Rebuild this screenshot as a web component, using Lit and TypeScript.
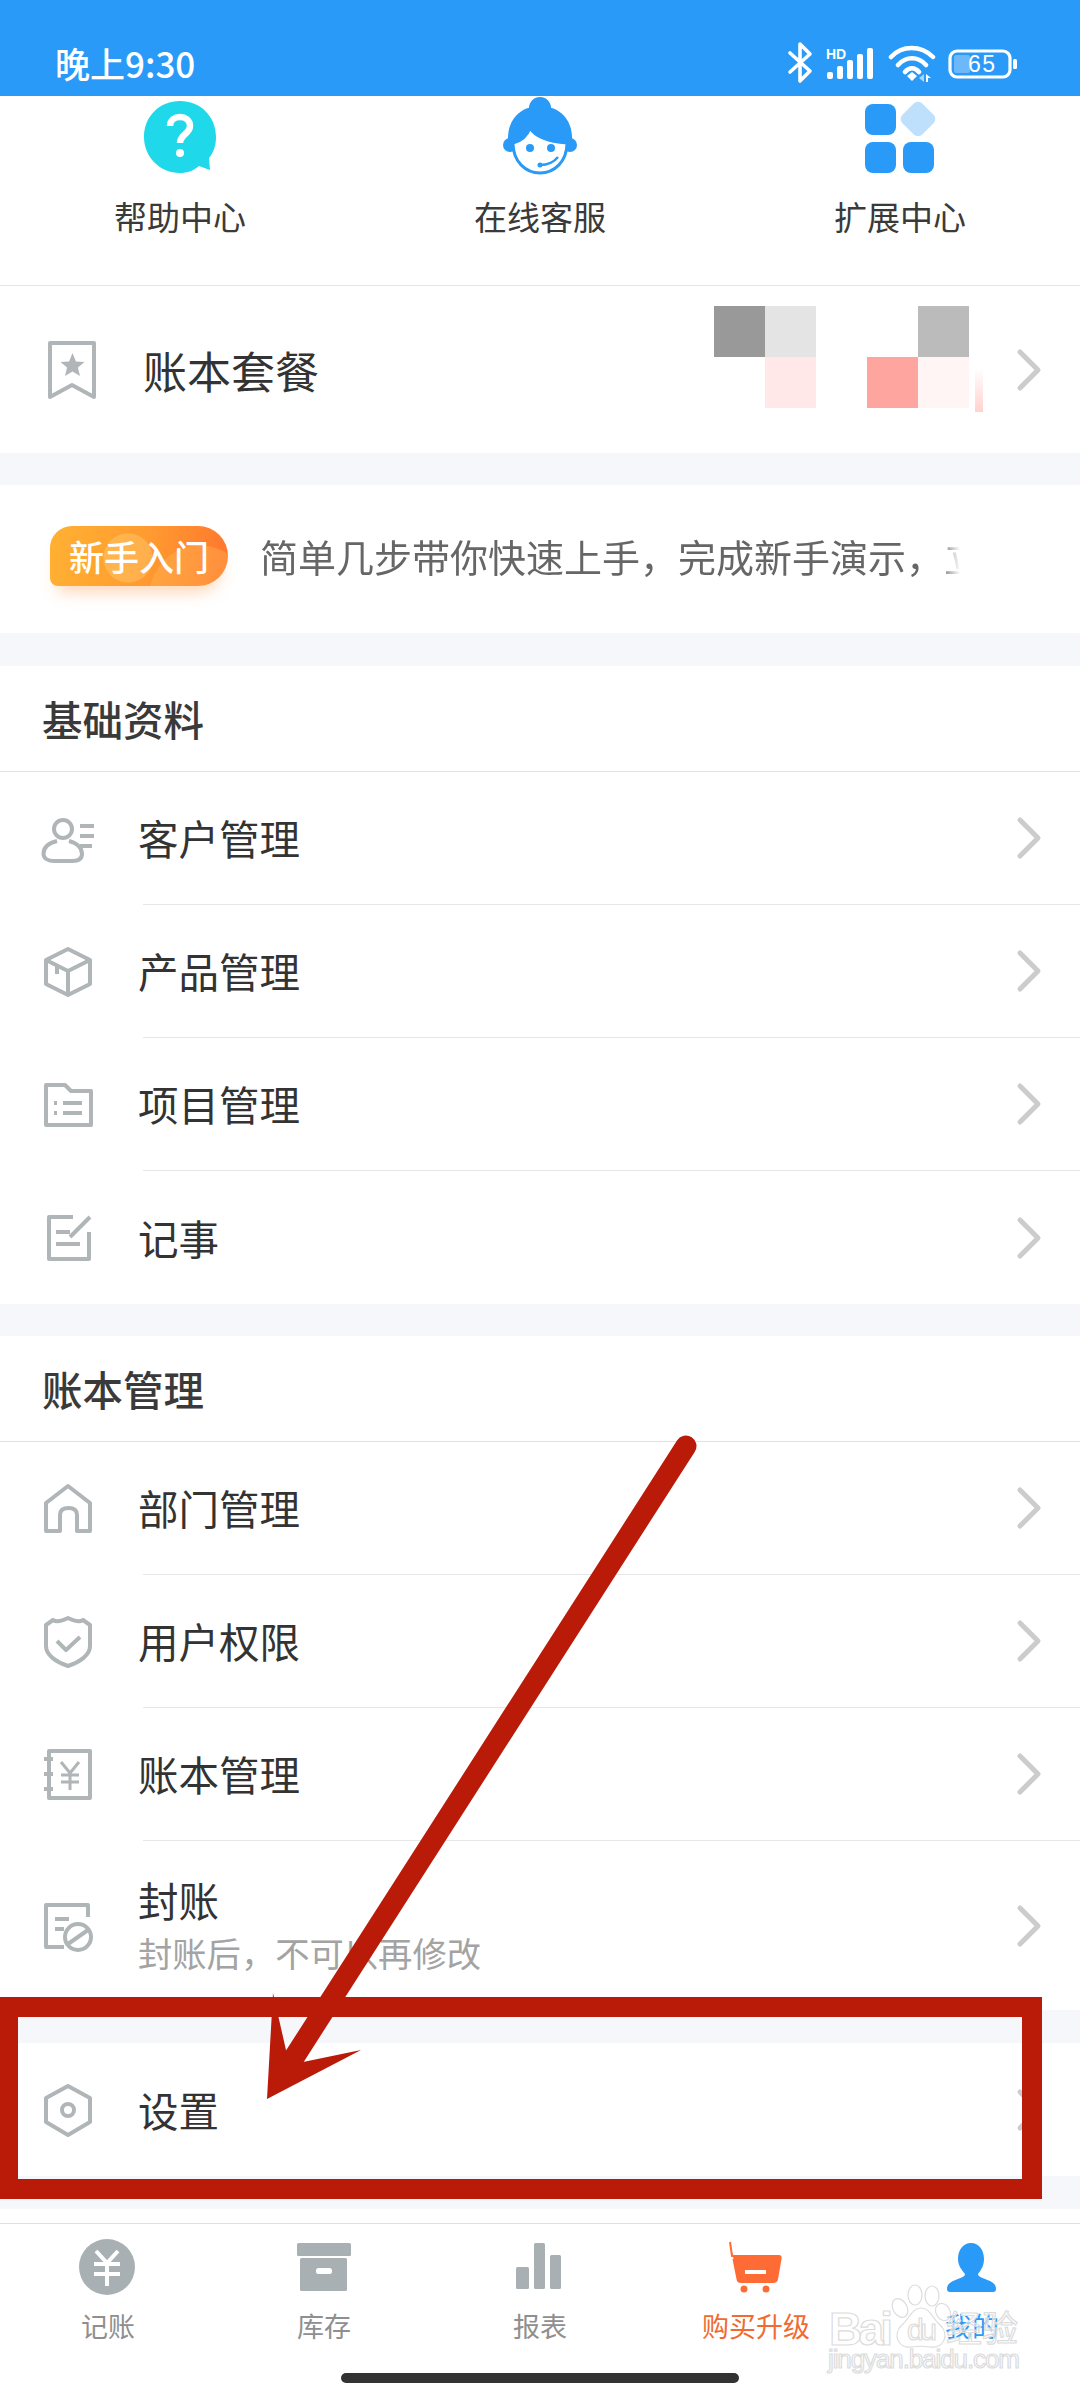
import { LitElement, html, css, svg } from "lit";
import { customElement } from "lit/decorators.js";

// Outline icons for the list rows, all on a 64 x 64 grid.
const rowIcons: Record<string, unknown> = {
  bookmark: svg`<path d="M14 5 H58 V59 L36 47 L14 59 Z"/><path class="solid" d="M36.500 15 l3.400 8.400 8.600 .6 -6.600 5.500 2.100 8.500 -7.500 -4.600 -7.500 4.600 2.100 -8.500 -6.600 -5.500 8.600 -.6 Z"/>`,
  customer: svg`<circle cx="27" cy="22" r="9"/><path d="M21 34 C12 36 7.500 41 7.500 47 C7.500 52 13 54 18 54 H36 C42 54 46 52 46 47 C46 41 41 36 33 34"/><path d="M44 19 H58 M44 29 H58 M44 39 H56"/>`,
  box: svg`<path d="M32 9 L54 20 V44 L32 55 L10 44 V20 Z"/><path d="M10 20 L32 31 L54 20 M32 31 V55 M21 26 V34"/>`,
  folder: svg`<path d="M10 12 H29 L35 18 H55 V52 H10 Z"/><path d="M27 30 H46 M27 40 H46 M18 30 H21 M18 40 H21"/>`,
  note: svg`<path d="M37 11 H13 V53 H53 V26"/><path d="M20 26 H34 M20 38 H44 M34 31 L54 11"/>`,
  home: svg`<path d="M32 9 L54 26 V54 H41 V38 Q41 31 32.500 31 Q24 31 24 38 V54 H10 V26 Z"/>`,
  shield: svg`<path d="M32 8 C38 11 44 12 47 10 L54 15 V36 C54 45 44 52 32 56 C20 52 10 45 10 36 V15 L17 10 C20 12 26 11 32 8 Z"/><path d="M21 31 L30 40 L44 27"/>`,
  ledger: svg`<path d="M13 8 H54 V55 H13 Z"/><path d="M8 16 H17 M8 31 H17 M8 46 H17"/><path class="thin" d="M25 19 L34 30 L43 19 M34 30 V47 M25 32 H43 M25 39 H43"/>`,
  seal: svg`<path d="M52 23 V11 H10 V53 H28"/><path d="M19 25 H33 M19 35 H28"/><circle cx="42" cy="43" r="13"/><path d="M32 50 L52 36"/>`,
  gear: svg`<path d="M32 8 L54 20 V44 L32 57 L10 44 V20 Z"/><circle cx="32" cy="32" r="6"/>`,
};

const chevron = html`<svg class="chev" viewBox="0 0 30 44"><path d="M6 4 L24 22 L6 40"/></svg>`;

interface Row { icon: string; label: string; note?: string }

const basics: Row[] = [
  { icon: "customer", label: "客户管理" },
  { icon: "box", label: "产品管理" },
  { icon: "folder", label: "项目管理" },
  { icon: "note", label: "记事" },
];

const books: Row[] = [
  { icon: "home", label: "部门管理" },
  { icon: "shield", label: "用户权限" },
  { icon: "ledger", label: "账本管理" },
  { icon: "seal", label: "封账", note: "封账后，不可以再修改" },
];

// Blurred plan name: one colour per mosaic tile, empty where the tile is blank.
const mosaic = ["#999999", "#e4e4e4", "", "", "#bbbbbb", "", "#ffe8e7", "", "#ffa5a0", "#fff5f4"];

const tabs = [
  {
    label: "记账", cls: "",
    icon: svg`<circle cx="31" cy="32" r="28" fill="#a9b0b3"/><path d="M20 16 L31 28 L42 16 M18 29 H44 M18 39 H44 M31 28 V51" fill="none" stroke="#fff" stroke-width="4"/>`,
  },
  {
    label: "库存", cls: "",
    icon: svg`<rect x="5" y="8" width="54" height="13" rx="1.500" fill="#a9b0b3"/><rect x="8" y="23" width="47" height="33" rx="1.500" fill="#a9b0b3"/><rect x="24" y="33" width="16" height="6" rx="2.500" fill="#fff"/>`,
  },
  {
    label: "报表", cls: "",
    icon: svg`<rect x="8" y="32" width="13" height="22" rx="1.500" fill="#a9b0b3"/><rect x="26" y="8" width="11" height="46" rx="1.500" fill="#a9b0b3"/><rect x="42" y="20" width="11" height="34" rx="1.500" fill="#a9b0b3"/>`,
  },
  {
    label: "购买升级", cls: "buy",
    icon: svg`<path d="M6 7 L8 21 H55 Q57 21 56.500 24 L53 44 Q52.500 47 49 47 H17 Q14 47 13.500 44 L9.500 24" fill="#ff6b35" stroke="#ff6b35" stroke-width="2" stroke-linejoin="round"/><rect x="21" y="35" width="21" height="4" fill="#fff"/><circle cx="20" cy="54" r="3.500" fill="#ff6b35"/><circle cx="42" cy="54" r="3.500" fill="#ff6b35"/>`,
  },
  {
    label: "我的", cls: "me",
    icon: svg`<path d="M31 8 C39 8 44 15 44 24 C44 31 41 35 38 39 C38 42 43 43 50 46 C54 48 56 50 56 54 Q56 57 53 57 H10 Q7 57 7 54 C7 50 9 48 13 46 C20 43 25 42 25 39 C22 35 18 31 18 24 C18 15 23 8 31 8 Z" fill="#2a9af8"/>`,
  },
];

@customElement("app-root")
export class AppRoot extends LitElement {
  static styles = css`
    :host {
      display: block;
      position: relative;
      width: 1080px;
      height: 2400px;
      overflow: hidden;
      background: #fff;
      color: #333;
      font-family: "Noto Sans CJK SC", "Noto Sans", sans-serif;
    }
    .status {
      height: 96px;
      box-sizing: border-box;
      padding: 30px 62px 0 55px;
      background: #2a9af8;
      color: #fff;
      display: flex;
      align-items: center;
    }
    .time { font-size: 35px; font-weight: 500; flex: 1; line-height: 44px; }
    .status svg { height: 44px; display: block; }
    .status text { font-family: "Liberation Sans", sans-serif; fill: #fff; }

    .shortcuts {
      height: 189px;
      border-bottom: 1px solid #e4e4e4;
      display: grid;
      grid-template-columns: repeat(3, 360px);
    }
    .shortcut {
      display: flex;
      flex-direction: column;
      align-items: center;
      font-size: 33px;
      line-height: 40px;
      color: #3a3a3a;
    }
    .shortcut svg { width: 84px; height: 84px; margin-bottom: 16px; display: block; }

    .gap { height: 32px; background: #f5f7fb; }
    .gap.tall { height: 33px; }

    .row { display: flex; align-items: stretch; height: 133px; background: #fff; }
    .row.plan { height: 167px; }
    .row.tallrow { height: 169px; }
    .ico {
      width: 64px;
      height: 64px;
      margin: auto 43px auto 36px;
      flex: none;
      fill: none;
      stroke: #b0b5b8;
      stroke-width: 4;
      stroke-linejoin: round;
    }
    .ico .solid { fill: #b0b5b8; stroke: none; }
    .ico .thin { stroke-width: 3; }
    .body {
      flex: 1;
      display: flex;
      align-items: center;
      border-bottom: 1px solid #e6e6e6;
      min-width: 0;
    }
    .row.last .body { border-bottom: none; }
    .text { flex: 1; margin-left: -5px; }
    .title { font-size: 40.500px; line-height: 50px; }
    .note { font-size: 34.300px; line-height: 48px; color: #a3a3a3; margin-top: 3px; }
    .plan .title { font-size: 44px; margin-left: 5px; }
    .chev {
      width: 30px;
      height: 44px;
      margin-right: 36px;
      flex: none;
      fill: none;
      stroke: #cccccc;
      stroke-width: 5;
      stroke-linecap: round;
      stroke-linejoin: round;
    }
    .mosaic {
      position: relative;
      display: grid;
      grid-template-columns: repeat(5, 51px);
      grid-auto-rows: 51px;
      margin: 0 45px 25px 0;
    }
    .smear {
      position: absolute;
      right: -14px;
      bottom: -4px;
      width: 8px;
      height: 44px;
      background: linear-gradient(180deg, transparent, #ffd3cf);
    }

    .intro {
      height: 148px;
      display: flex;
      align-items: center;
      padding-left: 50px;
      gap: 32px;
    }
    .badge {
      width: 178px;
      height: 60px;
      margin-top: -6px;
      flex: none;
      border-radius: 22px 30px 30px 8px;
      background:
        radial-gradient(circle at 78px 32px, rgba(255, 215, 130, 0.35) 0 24px, transparent 25px),
        radial-gradient(circle at 150px 70px, rgba(255, 190, 90, 0.35) 0 50px, transparent 51px),
        linear-gradient(100deg, #ffb133 0%, #ff9a30 55%, #ff752e 100%);
      box-shadow: 0 14px 16px -8px rgba(255, 150, 70, 0.4);
      color: #fff;
      font-size: 35px;
      font-weight: 500;
      line-height: 60px;
      text-align: center;
    }
    .pitch {
      width: 700px;
      margin-top: -6px;
      overflow: hidden;
      white-space: nowrap;
      font-size: 38px;
      line-height: 50px;
      color: #666;
      -webkit-mask-image: linear-gradient(90deg, #000 97%, transparent 100%);
      mask-image: linear-gradient(90deg, #000 97%, transparent 100%);
    }

    .head {
      height: 106px;
      box-sizing: border-box;
      border-bottom: 1px solid #e2e2e2;
      padding: 0 0 0 42px;
      display: flex;
      align-items: center;
      font-size: 40.500px;
      font-weight: 500;
      color: #3a3a3a;
    }

    .tabs {
      margin-top: 14px;
      border-top: 1px solid #e0e0e0;
      display: grid;
      grid-template-columns: repeat(5, 216px);
      padding-top: 11px;
    }
    .tab {
      display: flex;
      flex-direction: column;
      align-items: center;
      font-size: 27px;
      line-height: 36px;
      color: #8f8f8f;
    }
    .tab svg { width: 64px; height: 64px; display: block; margin-bottom: 9px; }
    .tab.buy { color: #f06a32; }
    .tab.me { color: #2a9af8; }
    .indicator {
      width: 398px;
      height: 10px;
      margin: 29px auto 0;
      border-radius: 5px;
      background: #333;
    }

    /* Annotation drawn on top of the finished page */
    .markup { position: absolute; inset: 0; width: 1080px; height: 2400px; pointer-events: none; }

    /* Site watermark in the lower right corner */
    .stamp { position: absolute; left: 820px; top: 2270px; width: 210px; height: 115px; pointer-events: none; }
    .stamp svg { position: absolute; left: 0; top: 0; width: 210px; height: 115px; }
    .stamp text {
      fill: rgba(255, 255, 255, 0.55);
      stroke: #dcdcdc;
      stroke-width: 1.200;
    }
    .stamp .latin { font-family: "Liberation Sans", sans-serif; }
    .stamp .cjk { font-family: "Noto Sans CJK SC", sans-serif; }
  `;

  private renderRow(r: Row, last = false) {
    return html`<div class="row ${r.note ? "tallrow" : ""} ${last ? "last" : ""}">
      <svg class="ico" viewBox="0 0 64 64">${rowIcons[r.icon]}</svg>
      <div class="body">
        <div class="text">
          <div class="title">${r.label}</div>
          ${r.note ? html`<div class="note">${r.note}</div>` : ""}
        </div>
        ${chevron}
      </div>
    </div>`;
  }

  private renderStatus() {
    return html`<div class="status">
      <div class="time">晚上9:30</div>
      <svg style="width:28px" viewBox="0 0 28 44">
        <path d="M4 12 L24 30 L14 40 V3 L24 13 L4 31" fill="none" stroke="#fff" stroke-width="3.600" stroke-linejoin="round" stroke-linecap="round"/>
      </svg>
      <svg style="width:54px;margin-left:10px" viewBox="0 0 54 44">
        <text x="2" y="18" font-size="14" font-weight="700">HD</text>
        <rect x="3" y="31" width="6" height="7" rx="2" fill="#fff"/>
        <rect x="13" y="25" width="6" height="13" rx="2" fill="#fff"/>
        <rect x="23" y="19" width="6" height="19" rx="2" fill="#fff"/>
        <rect x="33" y="13" width="6" height="25" rx="2" fill="#fff"/>
        <rect x="43" y="7" width="6" height="31" rx="2" fill="#fff"/>
      </svg>
      <svg style="width:48px;margin-left:10px" viewBox="0 0 48 44">
        <path d="M3 16 C14 4 33 4 45 16 M10 24 C18 15 30 15 38 24 M17 31 C21 26 27 26 31 31" fill="none" stroke="#fff" stroke-width="4.500" stroke-linecap="round"/>
        <path d="M19 35 L24 31 L29 35 L24 40 Z" fill="#fff"/>
        <path d="M31 37 L36 33 V41 Z" fill="#a9d5fb"/>
        <path d="M38 33 L43 37 H40 V41 H38 Z" fill="#fff"/>
      </svg>
      <svg style="width:70px;margin-left:12px" viewBox="0 0 70 44">
        <rect x="2" y="10" width="60" height="26" rx="7" fill="none" stroke="#fff" stroke-width="3.200"/>
        <rect x="6" y="14" width="16" height="18" rx="2.500" fill="#6db8fb"/>
        <rect x="65" y="18" width="4" height="10" rx="1.500" fill="#fff"/>
        <text x="20" y="31" font-size="23" textLength="27">65</text>
      </svg>
    </div>`;
  }

  private renderShortcuts() {
    return html`<div class="shortcuts">
      <div class="shortcut">
        <svg viewBox="0 0 84 84">
          <path d="M42 5 C62 5 78 20 78 41 C78 49 76 56 71 62 L72 74 L61 70 C55 75 49 77 42 77 C22 77 6 61 6 41 C6 20 22 5 42 5 Z" fill="#1fd8ea"/>
          <path d="M32 30 C32 18 52 18 52 30 C52 38 42 38 42 47" fill="none" stroke="#fff" stroke-width="6.500"/>
          <circle cx="42" cy="57" r="4" fill="#fff"/>
        </svg>
        <div>帮助中心</div>
      </div>
      <div class="shortcut">
        <svg viewBox="0 0 84 84">
          <circle cx="42" cy="12" r="11" fill="#2a9af8"/>
          <path d="M42 10 C62 10 74 24 74 42 V52 H10 V42 C10 24 22 10 42 10 Z" fill="#2a9af8"/>
          <circle cx="12" cy="49" r="7" fill="#2a9af8"/>
          <circle cx="72" cy="49" r="7" fill="#2a9af8"/>
          <path d="M32 32 C38 42 55 46 69 47 C69 66 56 77 42 77 C28 77 15 66 15 47 C24 45 29 40 32 32 Z" fill="#fff" stroke="#2a9af8" stroke-width="3"/>
          <circle cx="32" cy="52" r="4" fill="#2a9af8"/>
          <circle cx="53" cy="52" r="4" fill="#2a9af8"/>
          <path d="M42 69 C50 69 56 66 60 61" fill="none" stroke="#2a9af8" stroke-width="2.500"/>
          <circle cx="42" cy="69" r="2.500" fill="#2a9af8"/>
        </svg>
        <div>在线客服</div>
      </div>
      <div class="shortcut">
        <svg viewBox="0 0 84 84">
          <rect x="7" y="8" width="31" height="31" rx="8" fill="#2a9af8"/>
          <rect x="7" y="46" width="31" height="31" rx="8" fill="#2a9af8"/>
          <rect x="45" y="46" width="31" height="31" rx="8" fill="#2a9af8"/>
          <rect x="46" y="9" width="28" height="28" rx="6" fill="#bfe0fd" transform="rotate(45 60 23)"/>
        </svg>
        <div>扩展中心</div>
      </div>
    </div>`;
  }

  render() {
    return html`
      ${this.renderStatus()}
      ${this.renderShortcuts()}

      <div class="row plan last">
        <svg class="ico" viewBox="0 0 64 64">${rowIcons.bookmark}</svg>
        <div class="body">
          <div class="text"><div class="title">账本套餐</div></div>
          <div class="mosaic">
            ${mosaic.map((c) => html`<div style="background:${c || "transparent"}"></div>`)}
            <div class="smear"></div>
          </div>
          ${chevron}
        </div>
      </div>
      <div class="gap"></div>

      <div class="intro">
        <div class="badge">新手入门</div>
        <div class="pitch">简单几步带你快速上手，完成新手演示，立即开始使用</div>
      </div>
      <div class="gap tall"></div>

      <div class="head">基础资料</div>
      ${basics.map((r, i) => this.renderRow(r, i === basics.length - 1))}
      <div class="gap"></div>

      <div class="head">账本管理</div>
      ${books.map((r, i) => this.renderRow(r, i === books.length - 1))}
      <div class="gap tall"></div>

      ${this.renderRow({ icon: "gear", label: "设置" }, true)}
      <div class="gap tall"></div>

      <div class="tabs">
        ${tabs.map(
          (t) => html`<div class="tab ${t.cls}">
            <svg viewBox="0 0 64 64">${t.icon}</svg>
            <div>${t.label}</div>
          </div>`
        )}
      </div>
      <div class="indicator"></div>

      <div class="stamp">
        <svg viewBox="0 0 210 115">
          <g fill="#fff" fill-opacity="0.6" stroke="#dcdcdc" stroke-width="1.200">
            <ellipse cx="80" cy="38" rx="7" ry="10" transform="rotate(-30 80 38)"/>
            <ellipse cx="95" cy="25" rx="7" ry="10"/>
            <ellipse cx="112" cy="26" rx="7" ry="10"/>
            <ellipse cx="123" cy="42" rx="7" ry="9" transform="rotate(-30 123 42)"/>
            <path d="M101 38 C110 38 112 48 120 55 C130 64 124 79 110 77 C104 76 98 76 92 77 C78 79 72 64 82 55 C90 48 92 38 101 38 Z"/>
          </g>
          <text class="latin" x="9" y="75" font-size="46" font-weight="700" textLength="64">Bai</text>
          <text class="latin" x="87" y="70" font-size="30" textLength="30">du</text>
          <text class="cjk" x="126" y="72" font-size="36" textLength="72">经验</text>
          <text class="latin" x="8" y="98" font-size="26" textLength="192">jingyan.baidu.com</text>
        </svg>
      </div>

      <svg class="markup" viewBox="0 0 1080 2400">
        <path fill="#ba1b09" fill-rule="evenodd" d="M0 1997 H1042 V2199 H0 Z M18 2017 V2179 H1022 V2017 Z"/>
        <line x1="686" y1="1446" x2="295" y2="2056" stroke="#ba1b09" stroke-width="21" stroke-linecap="round"/>
        <path fill="#ba1b09" d="M273 1993 L286 2050 L303 2062 L361 2050 L267 2099 Z"/>
      </svg>
    `;
  }
}
